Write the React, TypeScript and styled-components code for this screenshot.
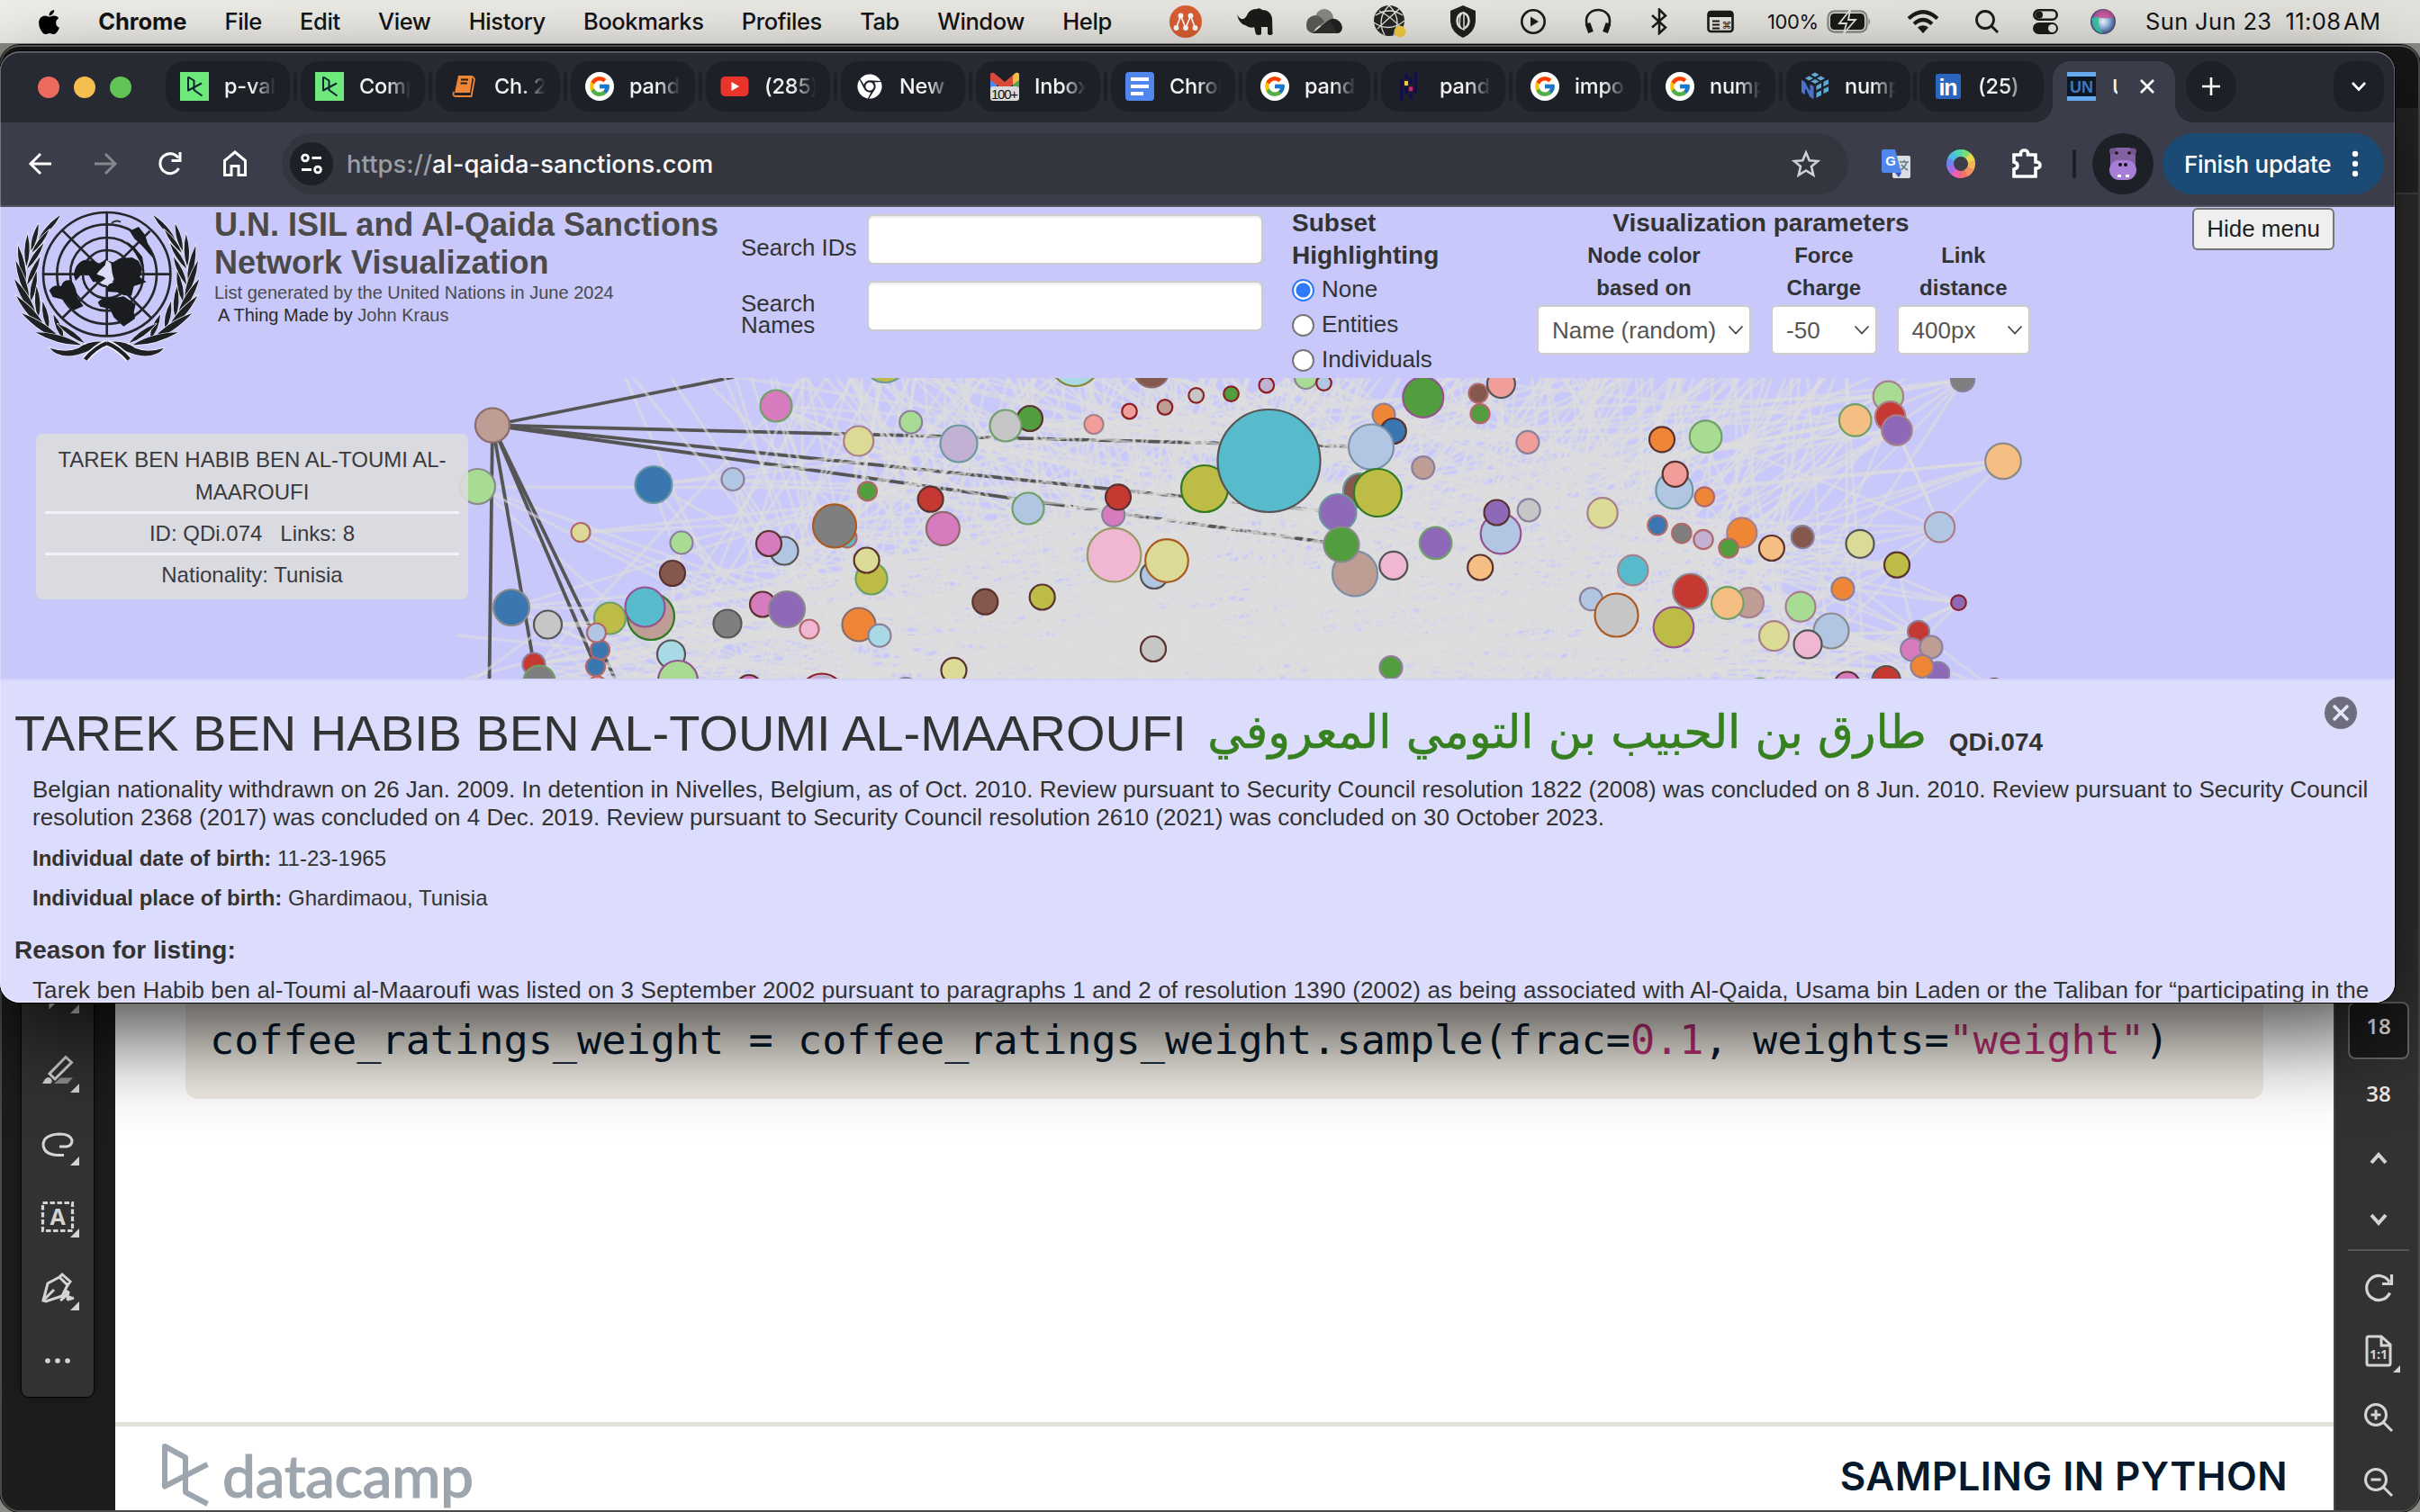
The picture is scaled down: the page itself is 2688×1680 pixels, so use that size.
import React from "react";
import styled, { createGlobalStyle, css } from "styled-components";
import { FaApple, FaChrome } from "react-icons/fa";
import { FcGoogle } from "react-icons/fc";

const sans = `"Liberation Sans", Arial, Helvetica, sans-serif`;
const ui = `Inter, Roboto, sans-serif`;

const Global = createGlobalStyle`
  html, body { margin: 0; padding: 0; background: #1c1c1c; }
  *, *::before, *::after { box-sizing: border-box; }
  svg { display: block; flex: none; }
`;

const Desktop = styled.div`
  position: relative;
  width: 2688px;
  height: 1680px;
  overflow: hidden;
  background: #8a8a84;
  font-family: ${ui};
`;

/* ---------- system menu bar ---------- */

const MenuBar = styled.header`
  display: flex;
  align-items: center;
  height: 48px;
  padding-left: 39px;
  background: linear-gradient(90deg, #efeee9, #e4e2dc);
  color: #141414;
  font-size: 25.5px;
  line-height: 46px;
`;

const MenuItems = styled.nav`
  display: flex;
  align-items: center;
  gap: 42.3px;
  width: 1240px;
  white-space: pre;
  letter-spacing: -0.42px;
  font-weight: 450;
`;

const AppName = styled.b`
  margin-left: -3px;
  font-weight: 700;
  letter-spacing: -0.1px;
`;

const Slot = styled.span<{ $w: number }>`
  display: flex;
  justify-content: center;
  align-items: center;
  width: ${(p) => p.$w}px;
  height: 48px;
  flex: none;
`;

const Percent = styled.span`
  width: 66px;
  font-size: 22px;
  letter-spacing: -0.4px;
  margin-left: 13px;
  flex: none;
`;

const Clock = styled.span`
  font-size: 25.5px;
  white-space: pre;
  letter-spacing: 0.36px;
`;

/* ---------- document viewer window ---------- */

const Viewer = styled.section`
  position: absolute;
  left: 0;
  top: 50px;
  width: 2688px;
  height: 1630px;
  display: flex;
  flex-direction: column;
  overflow: hidden;
  border: 2px solid #4a4a4a;
  border-top-color: #5c5d5b;
  border-radius: 22px;
  background: #1c1c1c;
  outline: 1px solid #000;
`;

const ViewerTitle = styled.div`
  height: 68px;
  background: #171717;
  flex: none;
`;

const ViewerTools = styled.div`
  height: 96px;
  background: #272727;
  border-bottom: 2px solid #474747;
  flex: none;
`;

const ViewerBody = styled.div`
  flex: 1;
  display: flex;
  min-height: 0;
`;

const LeftRail = styled.aside`
  width: 126px;
  padding: 800px 0 126px 22px;
  background: #1d1d1d;
  flex: none;
`;

const ToolPanel = styled.div`
  display: flex;
  flex-direction: column;
  justify-content: flex-end;
  width: 80px;
  height: 536px;
  background: #323232;
  border-radius: 0 0 8px 8px;
  box-shadow: 0 0 0 1px #050505, 0 0 20px rgba(0, 0, 0, 0.4);
`;

const ToolCell = styled.div`
  display: flex;
  align-items: center;
  justify-content: center;
  height: 80.5px;
  padding-top: 5px;
  flex: none;
  &:last-child {
    padding-top: 0;
  }
`;

const Slide = styled.main`
  width: 2464px;
  display: flex;
  flex-direction: column;
  background: #fff;
  flex: none;
`;

const CodeBlock = styled.pre`
  display: flex;
  align-items: flex-end;
  width: 2308px;
  height: 904px;
  margin: 101px 0 0 78px;
  padding: 0 0 35px 27px;
  border-radius: 14px;
  background: #f1ece4;
  color: #05192d;
  font: 45.2px/60px "DejaVu Sans Mono", "Liberation Mono", monospace;
  flex: none;
`;

const Code = styled.code`
  font: inherit;
`;

const Literal = styled.span`
  color: #be2f75;
`;

const SlideFooter = styled.footer`
  display: flex;
  justify-content: space-between;
  height: 106px;
  margin-top: 359px;
  padding: 18px 51px 0 51px;
  border-top: 5px solid #e3e0da;
  flex: none;
`;

const Brand = styled.div`
  display: flex;
  color: #9da5ae;
  gap: 14px;
`;

const Wordmark = styled.span`
  font: 500 66px/70px Lato, sans-serif;
  letter-spacing: -0.5px;
  -webkit-text-stroke: 1px #9da5ae;
  margin-top: 1px;
`;

const Course = styled.span`
  font: 600 44px/60px ${ui};
  color: #05192d;
  margin-top: 7px;
  letter-spacing: 0.42px;
  white-space: nowrap;
`;

const RightRail = styled.aside`
  width: 94px;
  display: flex;
  flex-direction: column;
  align-items: center;
  padding: 897px 0 0 4px;
  background: #323232;
  border-left: 2px solid #464646;
  color: #f0f0f0;
  font: 600 24px "Open Sans", sans-serif;
  flex: none;
`;

const PageBox = styled.div`
  display: flex;
  justify-content: center;
  width: 68px;
  height: 64px;
  border: 2px solid #6a6a6a;
  border-radius: 8px;
  background: #1b1b1b;
  line-height: 50px;
  flex: none;
`;

const RailCell = styled.div<{ $h: number }>`
  display: flex;
  align-items: center;
  justify-content: center;
  height: ${(p) => p.$h}px;
  flex: none;
`;

const RailRule = styled.hr`
  width: 68px;
  height: 2px;
  margin: 0 0 2px;
  border: 0;
  background: #565656;
  flex: none;
`;

/* ---------- browser window ---------- */

const Browser = styled.section`
  position: absolute;
  left: 0;
  top: 57px;
  width: 2660px;
  height: 1057px;
  border-radius: 22px;
  background: #282a33;
  box-shadow: 0 0 0 1px #000, 0 36px 100px rgba(0, 0, 0, 0.72);
`;

const Clip = styled.div`
  display: flex;
  flex-direction: column;
  height: 100%;
  overflow: hidden;
  border-radius: 22px;
  &::after {
    content: "";
    position: absolute;
    inset: 0;
    border-radius: 22px;
    box-shadow: inset 0 1.5px 0 #6c6f78, inset 1px 0 0 rgba(255, 255, 255, 0.3), inset -1px 0 0 rgba(255, 255, 255, 0.25), inset 0 -1px 0 rgba(255, 255, 255, 0.6);
    pointer-events: none;
  }
`;

const TabStrip = styled.div`
  display: flex;
  align-items: flex-start;
  height: 79px;
  padding-top: 11px;
  flex: none;
`;

const Lights = styled.div`
  display: flex;
  gap: 16px;
  width: 184px;
  padding: 17px 0 0 42px;
  flex: none;
`;

const Light = styled.i<{ $c: string }>`
  width: 24px;
  height: 24px;
  border-radius: 50%;
  background: ${(p) => p.$c};
`;

const TabBox = styled.div`
  display: flex;
  align-items: center;
  width: 138px;
  height: 56px;
  padding-left: 16px;
  gap: 17px;
  border-radius: 20px;
  background: #1e2028;
  flex: none;
`;

const TabLabel = styled.span`
  width: 57px;
  overflow: hidden;
  white-space: nowrap;
  color: #f3f3f5;
  font-size: 23.5px;
  font-weight: 500;
  letter-spacing: -0.2px;
  line-height: 54px;
  mask-image: linear-gradient(90deg, #000 55%, transparent 100%);
`;

const TabGap = styled.i<{ $w: number }>`
  width: ${(p) => p.$w}px;
  height: 56px;
  display: flex;
  justify-content: center;
  align-items: center;
  flex: none;
  &::before {
    content: "";
    width: 4px;
    height: 32px;
    border-radius: 2px;
    background: #1e2028;
  }
`;

const ActiveTab = styled.div`
  position: relative;
  display: flex;
  align-items: center;
  width: 136px;
  height: 68px;
  margin: 0 12px 0 10px;
  padding: 0 22px 12px 16px;
  border-radius: 20px 20px 0 0;
  background: #3b3e4a;
  flex: none;
  &::before,
  &::after {
    content: "";
    position: absolute;
    bottom: 0;
    width: 20px;
    height: 20px;
  }
  &::before {
    left: -20px;
    background: radial-gradient(circle at 0 0, transparent 19.5px, #3b3e4a 20px);
  }
  &::after {
    right: -20px;
    background: radial-gradient(circle at 100% 0, transparent 19.5px, #3b3e4a 20px);
  }
`;

const ActiveLabel = styled.span`
  width: 6px;
  margin: 0 24px 0 18px;
  overflow: hidden;
  color: #f3f3f5;
  font-size: 23.5px;
  font-weight: 500;
`;

const StripButton = styled.div<{ $round?: boolean }>`
  display: flex;
  align-items: center;
  justify-content: center;
  width: 56px;
  height: 56px;
  border-radius: ${(p) => (p.$round ? "28px" : "20px")};
  background: #1e2028;
  flex: none;
  & + & {
    margin-left: 108px;
  }
`;

const Toolbar = styled.div`
  display: flex;
  align-items: center;
  height: 94px;
  background: #3b3e4a;
  border-bottom: 2px solid #52535c;
  flex: none;
`;

const NavButtons = styled.div`
  display: flex;
  align-items: center;
  width: 313px;
  padding-left: 9px;
  flex: none;
`;

const Omnibox = styled.div`
  display: flex;
  align-items: center;
  width: 1740px;
  height: 68px;
  padding: 0 31px 0 9px;
  border-radius: 34px;
  background: #33353f;
  flex: none;
`;

const SiteInfo = styled.div`
  display: flex;
  align-items: center;
  justify-content: center;
  width: 48px;
  height: 48px;
  border-radius: 50%;
  background: #1e2028;
`;

const Url = styled.span`
  flex: 1;
  margin-left: 15px;
  color: #fbfbfb;
  font-size: 27.3px;
  letter-spacing: 0.1px;
  font-weight: 450;
`;

const Scheme = styled.span`
  color: #9d9ea5;
`;

const BarRule = styled.i`
  width: 4px;
  height: 32px;
  border-radius: 2px;
  background: #1e2028;
  margin: 0 18px 0 0;
`;

const Avatar = styled.div`
  display: flex;
  align-items: center;
  justify-content: center;
  width: 68px;
  height: 68px;
  border-radius: 50%;
  background: #1e2028;
  margin-right: 10px;
`;

const UpdateButton = styled.div`
  display: flex;
  align-items: center;
  justify-content: space-between;
  width: 246px;
  height: 68px;
  padding: 0 28px 0 24px;
  border-radius: 34px;
  background: #1b4a75;
  color: #fff;
  font-size: 26px;
  font-weight: 500;
  letter-spacing: -0.3px;
  white-space: nowrap;
`;

/* ---------- web page ---------- */

const Page = styled.div`
  flex: 1;
  display: flex;
  flex-direction: column;
  min-height: 0;
  background: #c8c8fb;
  color: #333;
  font-family: ${sans};
`;

const PageHeader = styled.div`
  display: flex;
  height: 190px;
  flex: none;
`;

const EmblemBox = styled.div`
  width: 238px;
  padding: 3px 0 0 16px;
  flex: none;
`;

const TitleBlock = styled.div`
  width: 585px;
  margin-top: -1px;
  color: #4a4a4a;
  flex: none;
`;

const SiteTitle = styled.h1`
  margin: 0 0 1px;
  font-size: 36px;
  line-height: 41.5px;
  white-space: nowrap;
`;

const Byline = styled.p<{ $dark?: boolean }>`
  margin: 0;
  padding-left: ${(p) => (p.$dark ? 4 : 0)}px;
  font-size: 20px;
  line-height: 25.4px;
  color: ${(p) => (p.$dark ? "#2c2c2c" : "#4a4a4a")};
`;

const Muted = styled.span`
  color: #4a4a4a;
`;

const SearchGrid = styled.div`
  display: grid;
  grid-template-columns: 140px 440px;
  grid-auto-rows: 74px;
  width: 612px;
  padding-top: 8px;
  font-size: 26px;
  line-height: 24px;
  flex: none;
`;

const SearchLabel = styled.label<{ $top: number }>`
  padding-top: ${(p) => p.$top}px;
`;

const SearchInput = styled.input`
  width: 440px;
  height: 56px;
  border: 2px solid #ccc;
  border-radius: 7px;
  background: #fff;
  box-shadow: inset 0 2px 2px rgba(0, 0, 0, 0.08);
`;

const Subset = styled.div`
  width: 272px;
  font-size: 26px;
  flex: none;
`;

const GroupTitle = styled.h2<{ $center?: boolean }>`
  margin: 0;
  font-size: 28px;
  line-height: 36px;
  ${(p) => p.$center && css`text-align: center;`}
`;

const RadioRow = styled.label`
  display: flex;
  align-items: center;
  height: 39.3px;
  margin-bottom: 0;
  gap: 8px;
  line-height: 36px;
  padding-bottom: 2px;
`;

const Dot = styled.i<{ $on?: boolean }>`
  width: 25px;
  height: 25px;
  margin-top: 3px;
  border-radius: 50%;
  border: 2px solid ${(p) => (p.$on ? "#2f78f6" : "#767676")};
  background: ${(p) => (p.$on ? "radial-gradient(circle, #2f78f6 7.6px, #fff 8.4px)" : "#fff")};
`;

const Params = styled.div`
  width: 548px;
  margin-right: 180px;
  flex: none;
`;

const ParamTitle = styled(GroupTitle)`
  width: 498px;
  text-align: center;
`;

const ParamRow = styled.div`
  display: flex;
  gap: 22px;
`;

const Param = styled.div<{ $w: number }>`
  width: ${(p) => p.$w}px;
  text-align: center;
  font-weight: 700;
  font-size: 24px;
  line-height: 36px;
`;

const SelectBox = styled.div`
  display: flex;
  align-items: center;
  justify-content: space-between;
  height: 55px;
  margin-top: 1px;
  padding: 0 6px 0 15px;
  border: 2px solid #ccc;
  border-radius: 6px;
  background: #fff;
  color: #555;
  font-size: 26px;
  font-weight: 400;
  white-space: nowrap;
`;

const HideButton = styled.button`
  width: 158px;
  height: 47px;
  margin: 1px 0 0;
  padding: 0;
  border: 2px solid #767676;
  border-radius: 6px;
  background: #efefef;
  color: #1e1e1e;
  font: 26px ${sans};
`;

const GraphArea = styled.div`
  position: relative;
  height: 334px;
  flex: none;
`;

const NodeCard = styled.div`
  position: absolute;
  left: 40px;
  top: 62px;
  width: 480px;
  height: 184px;
  padding: 11px 10px 0;
  border-radius: 7px;
  background: rgba(219, 219, 222, 0.9);
  color: #3a3a3e;
  font-size: 24px;
  line-height: 36px;
  text-align: center;
`;

const CardRow = styled.div`
  white-space: pre;
  padding-bottom: 3px;
  & + & {
    border-top: 3px solid #f1f1f9;
    padding: 4px 0 3px;
  }
`;

const Detail = styled.div`
  position: relative;
  flex: 1;
  min-height: 0;
  overflow: hidden;
  border-top: 2px solid #d2d2fb;
  background: #dcdcfc;
  padding: 27px 16px 0;
`;

const DetailTitle = styled.h2`
  display: flex;
  align-items: baseline;
  margin: 0;
  height: 79px;
  font-size: 56px;
  font-weight: 400;
  line-height: 64px;
  white-space: nowrap;
`;

const ArabicName = styled.span`
  position: relative;
  top: -3px;
  width: 795px;
  margin: 0 25px 0 27px;
  color: #36801f;
  font: 51.2px/64px "DejaVu Sans", sans-serif;
  text-align: right;
  -webkit-text-stroke: 0.6px #36801f;
`;

const RefId = styled.b`
  font-size: 28px;
`;

const Notes = styled.p<{ $loose?: boolean }>`
  margin: 0 0 12px;
  padding-left: 20px;
  font-size: 26px;
  line-height: 31px;
  letter-spacing: ${(p) => (p.$loose ? "0.112px" : "0")};
  white-space: nowrap;
`;

const Fact = styled.p`
  margin: 0 0 8px;
  padding-left: 20px;
  font-size: 24px;
  line-height: 36px;
`;

const Reason = styled.h3`
  margin: 23px 0 12px;
  font-size: 28px;
  line-height: 34px;
`;

const CloseBadge = styled.div`
  position: absolute;
  right: 42px;
  top: 18px;
`;

/* ---------- graph data: x, y, radius, fill, outline ---------- */

const fill: Record<string, string> = {
  P: "#d67bbd", T: "#be9d95", g: "#a8dc94", B: "#3a76af", b: "#b1c6e3", k: "#dcda97",
  W: "#84584d", U: "#8d69b8", G: "#7f7f7f", p: "#efb7d1", l: "#c6c6c6", o: "#bcbc46",
  C: "#58bbcc", c: "#a9d9e4", R: "#c63832", N: "#529e3e", v: "#c2b1d3", s: "#f19d99",
  O: "#ef8636", h: "#f5be82",
};
const ring: Record<string, string> = {
  g: "#70a068", x: "#8a8a8a", d: "#555", u: "#8c7f9c", r: "#b0686b", w: "#5a3331",
  m: "#95528f", t: "#6b98a0", k: "#a8808c", y: "#999a62", n: "#a95a20", e: "#2f7a22",
  D: "#8b1f24", b: "#7b8fa6", q: "#8b6b6b", o: "#86862e",
};

const nodes: [number, number, number, string][] = [
  [862, 451, 18.5, "Pg"], [547, 472.5, 20, "Tq"], [530.5, 540.5, 20.5, "gx"], [726, 538.5, 21.5, "Bt"],
  [814, 532.5, 13.5, "bu"], [645, 591.5, 11.5, "kr"], [757, 603, 13.5, "gu"], [747, 637, 15, "Ww"],
  [871, 612, 16.5, "bd"], [854, 604, 15, "Pw"], [847, 671.5, 15, "Pw"], [874, 677, 21, "Ux"],
  [808, 693, 16.5, "Gd"], [899, 699, 11.5, "pr"], [568, 675, 21, "Bx"], [608.5, 694, 16.5, "ld"],
  [677.5, 687, 18.5, "og"], [723, 685, 27, "Te"], [716.5, 674.5, 23, "Cm"], [663.5, 762, 11.5, "sr"],
  [661.5, 740.5, 11.5, "Br"], [666.5, 722, 11.5, "Br"], [662.5, 703, 11.5, "br"],
  [593, 738, 13.5, "Ru"], [599, 757, 18.5, "Gg"], [745.5, 727, 16.5, "cd"], [753, 756, 23, "gm"],
  [832, 764, 15, "Pw"], [983, 401, 25, "ot"], [953.7, 490, 17.5, "kk"], [1011.7, 469, 13.5, "gu"],
  [1065, 493, 21.5, "vt"], [1144, 465, 15, "Nw"], [1117, 473, 18.5, "lg"], [1194, 401, 29, "co"],
  [1279, 411, 20.5, "Wq"], [1215, 471.5, 11.5, "sk"], [1254.5, 457, 9.3, "sD"], [1294, 452.5, 9.3, "TD"],
  [1328.7, 439.4, 9.3, "lD"], [1367.5, 437.6, 9.3, "ND"], [1406.8, 428, 9.3, "vD"], [1450.5, 419.5, 13.5, "gx"],
  [1470.5, 425.6, 9.3, "bD"], [1338, 543, 27, "oe"], [1409.5, 512, 58, "Cd"], [963.5, 545.8, 11.5, "Nr"],
  [1033.6, 554.7, 15, "Rw"], [1047.4, 587.4, 19.5, "Pq"], [941, 597.8, 11.5, "Cr"], [927, 584.3, 25, "Gn"],
  [1142, 565, 18.5, "bg"], [1236.7, 572.3, 13.5, "Pu"], [1242, 552.3, 15, "Rw"], [1237.6, 616.7, 30.8, "py"],
  [1282, 639, 16, "bd"], [1296, 623, 24.8, "kn"], [968, 643, 18.5, "og"], [962.6, 622.5, 15, "kw"],
  [1094.3, 668.7, 15, "Ww"], [1157.7, 663.5, 15, "ow"], [954, 694, 19.5, "Oq"], [977, 706.2, 13.5, "cu"],
  [1059.5, 744.8, 15, "kw"], [1281, 721, 15, "lw"], [913, 773.5, 26, "vD"], [1006.3, 766, 14, "Bu"],
  [1580.8, 441.4, 23.5, "Nm"], [1642, 437, 11.5, "Wr"], [1644, 459.7, 11.5, "Nr"], [1667.4, 426.6, 16.5, "sd"],
  [1537, 461, 13.5, "Ou"], [1547.8, 479, 15, "Bw"], [1523, 496.5, 26, "bb"], [1580.8, 519.6, 13.5, "Tu"],
  [1696.9, 491.3, 13.5, "su"], [1511, 545, 20, "Wt"], [1530.4, 547.5, 27.5, "oe"], [1486, 569.5, 21.5, "Ut"],
  [1505, 637.4, 26, "Tb"], [1490, 605, 20.5, "Nx"], [1547.8, 628.4, 16.5, "pd"], [1594.6, 603.3, 18.8, "Ug"],
  [1667, 593, 23.3, "bm"], [1662.5, 569.5, 15, "Uw"], [1698.2, 566.8, 13.5, "lu"], [1644.2, 630.5, 15, "hw"],
  [1780, 569.9, 17.7, "kk"], [1813.8, 633.6, 17.7, "Ck"], [1767.4, 665.6, 13.5, "bu"], [1795.5, 683.5, 25, "ln"],
  [1846, 488.3, 15, "Ow"], [1894.6, 485.2, 18.8, "gg"], [1859.8, 544.7, 21.5, "bt"], [1860.7, 526.8, 15, "sw"],
  [1893.3, 552, 11.7, "Or"], [1841, 583.6, 11.7, "Br"], [1867.9, 592.6, 11.7, "Gr"], [1892, 599.5, 11.7, "vr"],
  [1934.8, 591.9, 17.5, "Ok"], [1920, 609, 11.7, "Nr"], [1967.9, 609, 15, "hw"], [2002.2, 596.7, 13.5, "Wu"],
  [1877.7, 657, 20.5, "Rx"], [1859, 697, 23.3, "om"], [1942.4, 669.7, 17.5, "Tk"], [1918.8, 670, 18.8, "hg"],
  [2000, 674.2, 17.5, "gk"], [1970.5, 706.6, 17.5, "kk"], [2034, 701, 20.5, "bx"], [2008, 715.9, 16.5, "pd"],
  [2046.9, 654.2, 13.5, "Ou"], [1545, 741.7, 13.5, "Nu"], [2066, 604.3, 16.5, "kd"], [2060.7, 466.9, 18.8, "hg"],
  [1955, 767.5, 15, "gg"], [2097.4, 440.4, 17.7, "gk"], [2099.6, 462.8, 17.7, "Rk"], [2107, 478, 17.7, "Uk"],
  [2180, 422, 14, "Gu"], [2225, 512.4, 20.8, "hx"], [2154.5, 585.7, 17.7, "bk"], [2107, 627.7, 15, "ow"],
  [2175.5, 669.7, 9.3, "UD"], [2131, 701.8, 13, "Ru"], [2123.7, 721.7, 13.5, "Pu"], [2152.7, 748.2, 13.5, "Uu"],
  [2145, 719, 13.5, "Tu"], [2135, 740.3, 13.5, "Ou"], [2095.2, 755.5, 16.5, "Rd"], [2051.8, 760.5, 15, "Pw"],
  [2215, 766, 13, "Ww"],
];

const selected: [number, number, number, number][] = [
  [547, 472.5, 815, 419], [547, 472.5, 1523, 496.5], [547, 472.5, 1486, 569.5], [547, 472.5, 1490, 605],
  [547, 472.5, 543, 800], [547, 472.5, 593, 738], [547, 472.5, 661.5, 740.5], [547, 472.5, 684, 756],
];

const buildLinks = () => {
  let s = 7;
  const rnd = () => (s = (s * 16807) % 2147483647) / 2147483647;
  const gauss = () => rnd() + rnd() + rnd() - 1.5;
  const out: { d: string; over: boolean }[] = [];
  const push = (a: number, b: number, c: number, d: number) =>
    out.push({ d: `M${a.toFixed(0)} ${b.toFixed(0)}L${c.toFixed(0)} ${d.toFixed(0)}`, over: rnd() < 0.45 });
  nodes.forEach(([x, y, r], i) => {
    if (i === 1) return;
    const n = x < 700 || x > 2120 ? 4 : Math.round(r / 4);
    for (let k = 0; k < n; k++) {
      if (k % 3 === 0) {
        const t = nodes[Math.floor(rnd() * nodes.length)];
        if (t[0] > 560) push(x, y, t[0], t[1]);
      } else push(x, y, 1330 + gauss() * 800, 820 + rnd() * 420);
    }
  });
  for (let k = 0; k < 70; k++) push(1409, 512, 1300 + gauss() * 1000, k % 3 ? 760 + rnd() * 300 : 250 + rnd() * 150);
  for (let k = 0; k < 175; k++) push(1310 + gauss() * 640, 180 + rnd() * 240, 1270 + gauss() * 680, 780 + rnd() * 400);
  for (let k = 0; k < 85; k++) push(780 + rnd() * 250, 620 + rnd() * 400, 1500 + rnd() * 500, 480 + rnd() * 420);
  for (let k = 0; k < 75; k++) push(1650 + rnd() * 420, 300 + rnd() * 120, 1300 + rnd() * 780, 780 + rnd() * 300);
  for (let k = 0; k < 70; k++) push(1250 + gauss() * 500, 760 + rnd() * 60, 1250 + gauss() * 700, 620 + rnd() * 120);
  return out;
};
const links = buildLinks();

const Graph = () => (
  <svg width="2660" height="334" viewBox="0 420 2660 334">
    <g stroke="#dddddd" strokeOpacity="0.6" strokeWidth="3.4">
      {links.filter((l) => !l.over).map((l, i) => <path key={i} d={l.d} />)}
    </g>
    <g stroke="#555" strokeWidth="3.8">
      {selected.map(([a, b, c, d], i) => <line key={i} x1={a} y1={b} x2={c} y2={d} />)}
    </g>
    <g stroke="#dddddd" strokeOpacity="0.6" strokeWidth="3.2">
      {links.filter((l) => l.over).map((l, i) => <path key={i} d={l.d} />)}
    </g>
    <g strokeWidth="2.2">
      {nodes.map(([x, y, r, k], i) => (
        <circle key={i} cx={x} cy={y} r={r - 1} fill={fill[k[0]]} stroke={ring[k[1]]} />
      ))}
    </g>
  </svg>
);

/* ---------- emblem ---------- */

/* base x, base y, tip x, tip y, half width */
const leaves: [number, number, number, number, number][] = [
  [128, 120, 202, 38, 15],
  [104, 158, 128, 68, 15], [106, 165, 164, 88, 14],
  [88, 210, 92, 102, 16], [90, 218, 146, 132, 15],
  [86, 262, 60, 140, 18], [90, 272, 134, 178, 16],
  [98, 322, 52, 190, 19], [102, 328, 122, 226, 17],
  [122, 378, 48, 252, 21], [128, 380, 122, 276, 17],
  [155, 422, 54, 308, 22], [162, 420, 142, 326, 17],
  [205, 455, 72, 366, 22], [212, 452, 178, 370, 17],
  [270, 472, 118, 430, 22], [282, 466, 190, 400, 16],
];

const Wreath = () => (
  <g fill="#1f2125" stroke="#f2f2ff" strokeWidth="4" paintOrder="stroke">
    <path d="M350 462Q300 455 262 482Q220 500 166 482Q190 512 240 508Q290 500 316 478Q336 466 350 470Z" />
    {leaves.map(([a, b, c, d, w], i) => {
      const len = Math.hypot(c - a, d - b);
      const nx = (-(d - b) / len) * w;
      const ny = ((c - a) / len) * w;
      const mx = a + (c - a) * 0.45;
      const my = b + (d - b) * 0.45;
      return <path key={i} d={`M${a} ${b}Q${mx + nx} ${my + ny} ${c} ${d}Q${mx - nx} ${my - ny} ${a} ${b}Z`} />;
    })}
  </g>
);

const Emblem = () => (
  <svg width="206" height="170" viewBox="48 21 618 510">
    <Wreath />
    <g transform="translate(712 0) scale(-1 1)"><Wreath /></g>
    <g fill="none" stroke="#25272b" strokeWidth="8">
      <ellipse cx="356" cy="236" rx="212" ry="206" />
      {[166, 122, 80, 40].map((r) => <circle key={r} cx="356" cy="236" r={r} />)}
      <path d="M356 30V440M146 236H566M206 88L506 384M500 92L206 384" />
    </g>
    <path d="M330 205L356 190L376 205L384 250L360 276L332 262L322 236Z" fill="#dcdcf8" />
    <g fill="#1b1c1f">
      <path d="M246 240Q250 196 284 188L312 192L334 202L356 182L350 206L330 226L322 236L344 244L352 250L336 262L310 262L296 240L276 232L252 258Z" />
      <path d="M370 200L398 184L440 180L462 192L474 218L466 246L488 262L464 270L446 276L438 308L412 306L390 296L356 294L362 270L382 262L374 232Z" />
      <path d="M164 290Q180 268 204 276Q212 250 238 258Q256 282 256 312L278 342L246 356L214 322L176 312Z" />
      <path d="M326 330Q346 308 376 316L412 310L452 336L446 362L450 384L412 410L380 380L366 352L334 344Z" />
      <path d="M432 92L462 78L484 106L494 140L510 182L474 142L448 118Z" />
      <path d="M422 126L448 146L474 178L480 212L464 190L444 156Z" />
    </g>
    <path d="M372 66Q384 54 402 62" fill="none" stroke="#333" strokeWidth="6" />
    <path d="M356 465Q318 480 284 520M356 465Q394 480 430 520" fill="none" stroke="#f4f4ff" strokeWidth="22" />
    <path d="M356 466Q318 480 284 520M356 466Q394 480 430 520" fill="none" stroke="#1e2024" strokeWidth="13" />
  </svg>
);

/* ---------- favicons ---------- */

const icons: Record<string, React.ReactNode> = {
  camp: (
    <svg width="32" height="32">
      <rect width="32" height="32" fill="#6ee87a" />
      <path d="M9 5.5V20.5L24 12.5M9 5.5L15.5 9.5V20L24.5 26.5" fill="none" stroke="#0b2433" strokeWidth="2" strokeLinejoin="round" />
    </svg>
  ),
  book: (
    <svg width="32" height="32">
      <path d="M9 4H25L22 23H5Z" fill="#ef8636" />
      <path d="M12 8.5H20M11.5 12.5H19" stroke="#2a1d14" strokeWidth="2" />
      <path d="M25 5L27 8L23.5 27H6Q2.5 27 4 22" fill="none" stroke="#ef8636" strokeWidth="1.8" />
    </svg>
  ),
  google: (
    <svg width="32" height="32">
      <circle cx="16" cy="16" r="16" fill="#fff" />
      <FcGoogle x={3} y={3} size={26} />
    </svg>
  ),
  youtube: (
    <svg width="32" height="32">
      <rect x="0.5" y="5" width="31" height="22" rx="5" fill="#e8342a" />
      <path d="M12.5 11V21L21 16Z" fill="#fff" />
    </svg>
  ),
  chrome: <FaChrome size={28} color="#fff" />,
  gmail: (
    <svg width="32" height="32">
      <path d="M0 4V27H7V12L0 4Z" fill="#4f87ee" />
      <path d="M32 4V27H25V12Z" fill="#52a552" />
      <path d="M0 3Q0 0 4 1L16 11L28 1Q32 0 32 3V9L16 21L0 9Z" fill="#d9493a" />
      <path d="M25 4L28 1Q32 0 32 3V9L25 14Z" fill="#f2bd42" />
      <rect y="16" width="32" height="16" rx="3" fill="#d9dad9" />
      <text x="16" y="30" fontSize="15" textAnchor="middle" textLength="30" fontFamily="Liberation Sans" fill="#111">100+</text>
    </svg>
  ),
  docs: (
    <svg width="32" height="32">
      <rect width="32" height="32" rx="4" fill="#5186ec" />
      <path d="M6 8H26M6 16H26M6 24H20" stroke="#fff" strokeWidth="4" />
    </svg>
  ),
  pandas: (
    <svg width="32" height="32">
      <path d="M6.500 8V32M22.500 0V24" stroke="#150d52" strokeWidth="3.500" />
      <path d="M12 2V8M12 17V24M17 6V13M17 23V30" stroke="#150d52" strokeWidth="3.500" />
      <rect x="10" y="10" width="4" height="5" fill="#f5c842" />
      <rect x="15" y="16.500" width="4" height="4.500" fill="#d9247e" />
    </svg>
  ),
  numpy: (
    <svg width="32" height="32" stroke="#1e2028" strokeWidth="1">
      <path d="M16 0L21.5 3L16 6L10.5 3Z M9.5 4L15 7L9.5 10L4 7Z M22.5 4L28 7L22.5 10L17 7Z M16 7.5L21.5 10.5L16 13.5L10.5 10.5Z" fill="#5fa9d6" />
      <path d="M17 15L23.5 11.5V17.5L17 21Z M25 10.5L31.5 7.5V13.5L25 17Z M17 23L23.5 19.5V26L17 29.5Z M25 18.5L31.5 15.5V21.5L25 25Z" fill="#5fa9d6" />
      <path d="M0.5 8L5 10.5L10 20V13L15 15.5V31L10 28L5.5 19V26L0.5 23Z" fill="#4a70c9" />
    </svg>
  ),
  linkedin: (
    <svg width="32" height="32">
      <rect x="2" y="2" width="28" height="28" rx="2" fill="#2a66c0" />
      <text x="16" y="25.5" fontSize="25" fontWeight="700" textAnchor="middle" textLength="21" fontFamily="Liberation Sans" fill="#fff">in</text>
    </svg>
  ),
  un: (
    <svg width="32" height="32">
      <rect width="32" height="32" fill="#0d1626" />
      <rect width="32" height="5" fill="#64a8ee" />
      <rect y="27" width="32" height="5" fill="#64a8ee" />
      <text x="16" y="22.5" fontSize="18" fontWeight="700" textAnchor="middle" textLength="26" fontFamily="Liberation Sans" fill="#3f78b8">UN</text>
    </svg>
  ),
};

const tabs: [string, string][] = [
  ["camp", "p-value"], ["camp", "Compute"], ["book", "Ch. 2"], ["google", "pandas"], ["youtube", "(285)"],
  ["chrome", "New T"], ["gmail", "Inbox"], ["docs", "Chrom"], ["google", "pandas"], ["pandas", "pandas"],
  ["google", "import"], ["google", "numpy"], ["numpy", "numpy"], ["linkedin", "(25)"],
];

const IconBox = styled.span`
  display: flex;
  justify-content: center;
  align-items: center;
  width: 32px;
  height: 32px;
  flex: none;
`;

/* ---------- small line icons ---------- */

const Line = ({ s = 40, d, c = "#fff", w = 3, children }: { s?: number; d?: string; c?: string; w?: number; children?: React.ReactNode }) => (
  <svg width={s} height={s} viewBox={`0 0 ${s} ${s}`} fill="none" stroke={c} strokeWidth={w}>
    {d && <path d={d} />}
    {children}
  </svg>
);

const StatusIcons = () => (
  <>
    <Slot $w={76}>
      <svg width="36" height="36"><circle cx="18" cy="18" r="18" fill="#dc5f33" />
        <path d="M7.5 25L12.5 11.5L18 25L23.500 11.5L28.500 25" fill="none" stroke="#fff" strokeWidth="1.7" />
        {[[7.5, 25], [12.5, 11.5], [18, 25], [23.5, 11.5], [28.5, 25]].map(([x, y]) => <circle key={x} cx={x} cy={y} r="2.9" fill="#fff" />)}
      </svg>
    </Slot>
    <Slot $w={78}>
      <svg width="40" height="32"><path d="M0 8Q3 14 7 13Q10 12 12 7Q15 2 22 2Q25 0 28 3Q37 3 39 12L39.500 30Q37 32 34 30V22H27V30Q24 32 21 30L19 22Q15 24 9 20Q2 18 0 8Z" fill="#1b1b19" /></svg>
    </Slot>
    <Slot $w={76}>
      <svg width="40" height="28"><circle cx="20" cy="10" r="10" fill="#888884" /><path d="M8 27Q0 26 0 18Q0 9 9 7Q16 7 20 14L10 22Z" fill="#5b5b58" /><path d="M7 27L24 13Q31 8 37 14Q40 17 40 21Q39 27 34 27Z" fill="#232321" /><path d="M8 27L26 13L34 27Z" fill="#30302e" /></svg>
    </Slot>
    <Slot $w={70}>
      <svg width="36" height="38"><circle cx="17" cy="18" r="17" fill="#262624" />
        <g fill="none" stroke="#e6e5e0" strokeWidth="1.3"><path d="M2 12Q17 2 32 12M0 20Q17 32 34 18M17 1Q2 16 12 34M17 1Q32 16 22 34M4 27Q18 14 28 5M6 7Q20 14 31 27" /></g>
        <circle cx="29" cy="30" r="6.5" fill="#f7ce46" /></svg>
    </Slot>
    <Slot $w={92}>
      <svg width="30" height="36"><path d="M15 0L29 6V18Q28 30 15 36Q2 30 1 18V6Z" fill="#20201e" /><ellipse cx="15" cy="17" rx="6.5" ry="8.5" fill="none" stroke="#e8e7e2" strokeWidth="2.5" /><path d="M16 8V27Q10 25 11.5 17Q11 9 16 8Z" fill="#20201e" stroke="#e8e7e2" strokeWidth="1.5" /></svg>
    </Slot>
    <Slot $w={64}>
      <Line s={30} c="#1b1b19" w={2.6}><circle cx="15" cy="15" r="12.7" /><path d="M12 9.5V20.5L21 15Z" fill="#1b1b19" stroke="none" /></Line>
    </Slot>
    <Slot $w={79}>
      <Line s={30} c="#1b1b19" w={2.6} d="M3 20Q1 14 3 9Q7 2 15 2Q23 2 27 9Q29 14 27 20L25 26"><path d="M3.5 17L7 27M26.5 17L23 27" strokeWidth="6" /></Line>
    </Slot>
    <Slot $w={58}><Line s={30} c="#1b1b19" w={2.5} d="M7 8L22 21.5L15 28V1.5L22 8.5L7 21.5" /></Slot>
    <Slot $w={78}>
      <Line s={30} c="#1b1b19" w={2.6}><rect x="1.5" y="4" width="27" height="22" rx="3" /><path d="M1 7H29" strokeWidth="6" /><path d="M6 14.5H14M6 18.5H14M6 22.5H14" strokeWidth="2" />
        <text x="22" y="23" fontSize="11" fill="#1b1b19" stroke="none" textAnchor="middle" fontFamily="DejaVu Sans">⌘</text></Line>
    </Slot>
    <Percent>100%</Percent>
    <svg width="52" height="26"><rect x="1.5" y="1.5" width="43" height="23" rx="7" fill="none" stroke="#8f8e8a" strokeWidth="2.4" /><rect x="4" y="4" width="38" height="18" rx="4.5" fill="#1b1b19" /><path d="M46.5 9Q50 13 46.5 17Z" fill="#8f8e8a" /><path d="M26 0L14 15H22L19 26L32 11H24Z" fill="#1b1b19" stroke="#e8e7e2" strokeWidth="1.8" /></svg>
    <Slot $w={110}>
      <svg width="36" height="26" viewBox="0 0 36 26"><g fill="none" stroke="#1b1b19" strokeWidth="4.2"><path d="M2 9.5Q18 -5 34 9.5M8 15.5Q18 6.5 28 15.5" /></g><path d="M12 19.5Q18 15 24 19.5L18 26Z" fill="#1b1b19" /></svg>
    </Slot>
    <Slot $w={31}><Line s={28} c="#1b1b19" w={2.8} d="M18.5 18.5L26 26"><circle cx="12" cy="12" r="9.5" /></Line></Slot>
    <Slot $w={100}>
      <svg width="28" height="28"><rect x="1.3" y="1.3" width="25.4" height="10.4" rx="5.2" fill="none" stroke="#1b1b19" strokeWidth="2.6" /><circle cx="7" cy="6.5" r="4" fill="#1b1b19" /><rect y="15" width="28" height="13" rx="6.5" fill="#1b1b19" /><circle cx="21.5" cy="21.5" r="4.5" fill="#e8e7e2" /></svg>
    </Slot>
    <Slot $w={28}>
      <svg width="28" height="28"><defs><radialGradient id="siri"><stop offset="0" stopColor="#fff" /><stop offset="0.5" stopColor="#8fb6e6" /><stop offset="1" stopColor="#3b4a78" /></radialGradient></defs><circle cx="14" cy="14" r="14" fill="url(#siri)" /><path d="M3 8Q8 0 15 1Q24 1 26 9Q16 12 3 8Z" fill="#d9468e" opacity="0.75" /><path d="M1.500 10Q2 26 14 27Q8 20 9 9Z" fill="#39c9a0" opacity="0.9" /></svg>
    </Slot>
    <Slot $w={33} />
    <Clock>Sun Jun 23  11:08{"\u200a"}AM</Clock>
  </>
);

const tools = [
  <Line s={56} c="#cfcfcf" w={3} key="c" d="M12 10V26H20V34L28 26H42V10"><path d="M52 42V32L42 42Z" fill="#d4d4d4" stroke="none" /></Line>,
  <Line s={56} c="#d4d4d4" w={3} key="h" d="M37 10.5L43.5 16.5L25 35L19 29Z"><path d="M11 40L14 35Q18 31 21 35Q23 38 20 40Z" fill="#d4d4d4" stroke="none" /><path d="M24 40L31 33.5H45L39 40Z" fill="#8d8d8d" stroke="none" /><path d="M52 50V40L42 50Z" fill="#d4d4d4" stroke="none" /></Line>,
  <Line s={56} c="#d4d4d4" w={3} key="l" d="M30 29H38Q44 28 44 22Q42 15 30 15Q12 16 12 27Q13 38 28 38.5H35"><path d="M52 50V40L42 50Z" fill="#d4d4d4" stroke="none" /></Line>,
  <Line s={56} c="#d4d4d4" w={3.2} key="a"><rect x="11.5" y="11.5" width="33" height="31" strokeDasharray="5.5 2.5" /><text x="28" y="36" fontSize="25" fontWeight="700" fill="#d4d4d4" stroke="none" textAnchor="middle" fontFamily="Open Sans">A</text><path d="M52 50V40L42 50Z" fill="#d4d4d4" stroke="none" /></Line>,
  <Line s={56} c="#d4d4d4" w={3} key="p" d="M12 39L17 20L30 13L39 22L33 34L15 40ZM12 39L24 27M30 13L33 10L42 18L39 22M31 39Q38 34 38 30Q38 28 40 30Q38 38 40 38Q42 33 43 37L46 36"><path d="M52 50V40L42 50Z" fill="#d4d4d4" stroke="none" /></Line>,
  <svg width="56" height="56" key="d"><g fill="#d4d4d4"><circle cx="17" cy="28" r="2.8" /><circle cx="28" cy="28" r="2.8" /><circle cx="39" cy="28" r="2.8" /></g></svg>,
];

const Chevron = () => <svg width="18" height="12"><path d="M1.5 1.5L9 9.5L16.5 1.5" fill="none" stroke="#444" strokeWidth="1.8" /></svg>;

const hues = ["#f26d6d", "#ef5fae", "#a66be8", "#6a86f0", "#4fb9e6", "#4fd6b0", "#7bdc7a", "#e8d84f", "#f5b35a", "#f58f62"];

const ColorRing = () => (
  <svg width="32" height="32" fill="none" strokeWidth="8">
    {hues.map((c, i) => {
      const a = ((i * 36 + 60) * Math.PI) / 180;
      const b = ((i * 36 + 98) * Math.PI) / 180;
      return <path key={c} stroke={c} d={`M${16 + 12 * Math.cos(a)} ${16 + 12 * Math.sin(a)}A12 12 0 0 1 ${16 + 12 * Math.cos(b)} ${16 + 12 * Math.sin(b)}`} />;
    })}
  </svg>
);

export default function App() {
  return (
    <Desktop>
      <Global />
      <MenuBar>
        <MenuItems>
          <FaApple size={31} color="#000" />
          <AppName>Chrome</AppName>
          {["File", "Edit", "View", "History", "Bookmarks", "Profiles", "Tab", "Window", "Help"].map((t) => <span key={t}>{t}</span>)}
        </MenuItems>
        <StatusIcons />
      </MenuBar>

      <Viewer>
        <ViewerTitle />
        <ViewerTools />
        <ViewerBody>
          <LeftRail>
            <ToolPanel>{tools.map((t, i) => <ToolCell key={i}>{t}</ToolCell>)}</ToolPanel>
          </LeftRail>
          <Slide>
            <CodeBlock>
              <Code>coffee_ratings_weight = coffee_ratings_weight.sample(frac=<Literal>0.1</Literal>, weights=<Literal>"weight"</Literal>)</Code>
            </CodeBlock>
            <SlideFooter>
              <Brand>
                <svg width="54" height="72" viewBox="0 0 54 72" fill="none" stroke="#9da5ae" strokeWidth="6" strokeLinejoin="round">
                  <path d="M51.5 24L4 48.5V4L27 16.5V55L51.5 68" />
                </svg>
                <Wordmark>datacamp</Wordmark>
              </Brand>
              <Course>SAMPLING IN PYTHON</Course>
            </SlideFooter>
          </Slide>
          <RightRail>
            <PageBox>18</PageBox>
            <RailCell $h={75}>38</RailCell>
            <RailCell $h={70}><Line s={30} c="#d4d4d4" w={4} d="M7 20L15 11L23 20" /></RailCell>
            <RailCell $h={66}><Line s={30} c="#d4d4d4" w={4} d="M7 10L15 19L23 10" /></RailCell>
            <RailRule />
            <RailCell $h={78}><Line s={34} c="#d4d4d4" w={3.2} d="M29.5 22.5A13.5 13.5 0 1 1 29 10.5M31.5 2V12.5H21" /></RailCell>
            <RailCell $h={62}>
              <Line s={48} c="#d4d4d4" w={3}><path d="M12 8H27L37 17V38Q37 40 35 40H13Q11 40 11 38V10Q11 8 13 8M27 8V18H37" /><text x="24" y="33" fontSize="14" fontWeight="700" fill="#d4d4d4" stroke="none" textAnchor="middle" fontFamily="Open Sans">1:1</text><path d="M48 48V40L40 48Z" fill="#d4d4d4" stroke="none" /></Line>
            </RailCell>
            <RailCell $h={86}><Line s={34} c="#d4d4d4" w={3} d="M22.5 22.5L32 32M8.5 14H19.5M14 8.5V19.5"><circle cx="14" cy="14" r="11.5" /></Line></RailCell>
            <RailCell $h={58}><Line s={34} c="#d4d4d4" w={3} d="M22.5 22.5L32 32M8.5 14H19.5"><circle cx="14" cy="14" r="11.5" /></Line></RailCell>
          </RightRail>
        </ViewerBody>
      </Viewer>

      <Browser>
        <Clip>
          <TabStrip>
            <Lights>
              <Light $c="#ed6a5f" /><Light $c="#f5bf4f" /><Light $c="#61c555" />
            </Lights>
            {tabs.map(([icon, label], i) => (
              <React.Fragment key={i}>
                <TabBox><IconBox>{icons[icon]}</IconBox><TabLabel>{label}</TabLabel></TabBox>
                {i < 13 && <TabGap $w={i === 12 ? 10 : 12} />}
              </React.Fragment>
            ))}
            <ActiveTab>
              {icons.un}
              <ActiveLabel>U</ActiveLabel>
              <svg width="18" height="18"><path d="M2 2L16 16M16 2L2 16" stroke="#fff" strokeWidth="2.6" /></svg>
            </ActiveTab>
            <StripButton $round><svg width="22" height="22"><path d="M11 1V21M1 11H21" stroke="#fff" strokeWidth="2.6" /></svg></StripButton>
            <StripButton><svg width="18" height="12"><path d="M2 2L9 9.5L16 2" fill="none" stroke="#fff" strokeWidth="2.6" /></svg></StripButton>
          </TabStrip>
          <Toolbar>
            <NavButtons>
              <Slot $w={72}><Line s={30} d="M27 15H4M15 4L4 15L15 26" /></Slot>
              <Slot $w={72}><Line s={30} c="#85878e" d="M3 15H26M15 4L26 15L15 26" /></Slot>
              <Slot $w={72}><Line s={30} d="M24.5 20A11 11 0 1 1 24 8.5M26 2V11.5H16.5" /></Slot>
              <Slot $w={71}><Line s={32} d="M4.5 28.5V12.5L16 3L27.5 12.5V28.5H20V18.5H12V28.5Z" /></Slot>
            </NavButtons>
            <Omnibox>
              <SiteInfo><Line s={28} w={2.8} d="M14.5 7.5H25M3 20.5H14"><circle cx="7" cy="7.5" r="3.4" /><circle cx="21" cy="20.5" r="3.4" /></Line></SiteInfo>
              <Url><Scheme>https://</Scheme>al-qaida-sanctions.com</Url>
              <Line s={32} c="#d0d1d4" w={2.6} d="M16 3.5L19.7 12.2L29 13L22 19L24.2 28.5L16 23.5L7.8 28.5L10 19L3 13L12.3 12.2Z" />
            </Omnibox>
            <Slot $w={106}>
              <svg width="32" height="32"><rect x="12" y="7" width="20" height="25" rx="2" fill="#dcdde0" /><path d="M2 0H15L22 26H2Q0 26 0 24V2Q0 0 2 0Z" fill="#5186ec" /><path d="M15 26H22L19 31Z" fill="#3551bf" /><text x="10" y="18" fontSize="15" fontWeight="700" fill="#fff" textAnchor="middle" fontFamily="Liberation Sans">G</text><path d="M20 14H30M25 12V14M28 14Q26 20 21 23M22 17Q25 21 29 23" stroke="#5f7f8a" strokeWidth="1.7" fill="none" /></svg>
            </Slot>
            <Slot $w={38}><ColorRing /></Slot>
            <Slot $w={105}><Line s={36} w={3.6} d="M5 8H12.5V6Q13 3 16.5 3Q20 3 20.5 6V8H29V16Q34 16 34 19.5Q34 23 29 23V32H5V24Q9 23 9 20Q9 17 5 16Z" /></Slot>
            <BarRule />
            <Avatar>
              <svg width="34" height="38"><rect x="3" y="1" width="28" height="30" rx="8" fill="#8262a3" /><circle cx="5.5" cy="5" r="3.5" fill="#72558f" /><circle cx="28.5" cy="5" r="3.5" fill="#72558f" /><circle cx="10" cy="7" r="1.8" fill="#111" /><circle cx="24" cy="7" r="1.8" fill="#111" /><rect x="2" y="15" width="30" height="22" rx="11" fill="#a87fd8" /><circle cx="14" cy="20" r="2" fill="#111" /><circle cx="20" cy="20" r="2" fill="#111" /><path d="M11 31H15V34H11ZM20 31H24V34H20Z" fill="#fff" /></svg>
            </Avatar>
            <UpdateButton>
              Finish update
              <svg width="8" height="30" fill="#fff"><circle cx="4" cy="4" r="3.2" /><circle cx="4" cy="15" r="3.2" /><circle cx="4" cy="26" r="3.2" /></svg>
            </UpdateButton>
          </Toolbar>

          <Page>
            <PageHeader>
              <EmblemBox><Emblem /></EmblemBox>
              <TitleBlock>
                <SiteTitle>U.N. ISIL and Al-Qaida Sanctions<br />Network Visualization</SiteTitle>
                <Byline>List generated by the United Nations in June 2024</Byline>
                <Byline $dark>A Thing Made by <Muted>John Kraus</Muted></Byline>
              </TitleBlock>
              <SearchGrid>
                <SearchLabel $top={25}>Search IDs</SearchLabel>
                <SearchInput />
                <SearchLabel $top={13}>Search<br />Names</SearchLabel>
                <SearchInput />
              </SearchGrid>
              <Subset>
                <GroupTitle>Subset<br />Highlighting</GroupTitle>
                <RadioRow><Dot $on />None</RadioRow>
                <RadioRow><Dot />Entities</RadioRow>
                <RadioRow><Dot />Individuals</RadioRow>
              </Subset>
              <Params>
                <ParamTitle>Visualization parameters</ParamTitle>
                <ParamRow>
                  <Param $w={239}>Node color<br />based on<SelectBox>Name (random)<Chevron /></SelectBox></Param>
                  <Param $w={118}>Force<br />Charge<SelectBox>-50<Chevron /></SelectBox></Param>
                  <Param $w={149}>Link<br />distance<SelectBox>400px<Chevron /></SelectBox></Param>
                </ParamRow>
              </Params>
              <HideButton>Hide menu</HideButton>
            </PageHeader>

            <GraphArea>
              <Graph />
              <NodeCard>
                <CardRow>{"TAREK BEN HABIB BEN AL-TOUMI AL-\nMAAROUFI"}</CardRow>
                <CardRow>{"ID: QDi.074   Links: 8"}</CardRow>
                <CardRow>Nationality: Tunisia</CardRow>
              </NodeCard>
            </GraphArea>

            <Detail>
              <DetailTitle>
                TAREK BEN HABIB BEN AL-TOUMI AL-MAAROUFI
                <ArabicName dir="rtl" lang="ar">طارق بن الحبيب بن التومي المعروفي</ArabicName>
                <RefId>QDi.074</RefId>
              </DetailTitle>
              <Notes>
                Belgian nationality withdrawn on 26 Jan. 2009. In detention in Nivelles, Belgium, as of Oct. 2010. Review pursuant to Security Council resolution 1822 (2008) was concluded on 8 Jun. 2010. Review pursuant to Security Council<br />
                resolution 2368 (2017) was concluded on 4 Dec. 2019. Review pursuant to Security Council resolution 2610 (2021) was concluded on 30 October 2023.
              </Notes>
              <Fact><b>Individual date of birth:</b> 11-23-1965</Fact>
              <Fact><b>Individual place of birth:</b> Ghardimaou, Tunisia</Fact>
              <Reason>Reason for listing:</Reason>
              <Notes $loose>Tarek ben Habib ben al-Toumi al-Maaroufi was listed on 3 September 2002 pursuant to paragraphs 1 and 2 of resolution 1390 (2002) as being associated with Al-Qaida, Usama bin Laden or the Taliban for “participating in the</Notes>
              <CloseBadge>
                <svg width="36" height="36"><circle cx="18" cy="18" r="18" fill="#6e6e7e" /><path d="M10 10L26 26M26 10L10 26" stroke="#e8e8fc" strokeWidth="3.2" /></svg>
              </CloseBadge>
            </Detail>
          </Page>
        </Clip>
      </Browser>
    </Desktop>
  );
}
